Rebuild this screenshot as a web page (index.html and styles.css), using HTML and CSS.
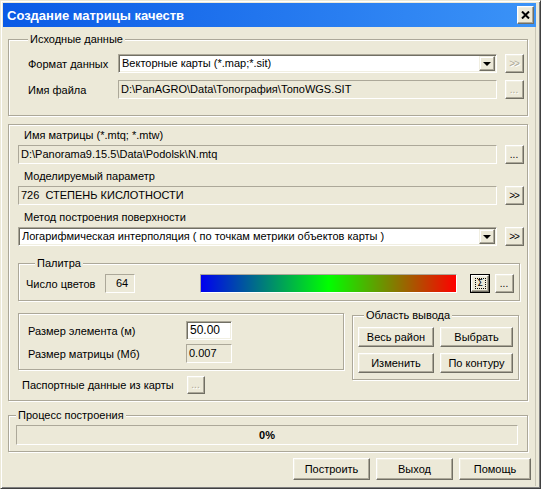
FILE: index.html
```html
<!DOCTYPE html>
<html lang="ru">
<head>
<meta charset="utf-8">
<title>Создание матрицы качеств</title>
<link rel="stylesheet" href="styles.css">
</head>
<body>
<div class="window">
  <div class="titlebar">
    <span class="title">Создание матрицы качеств</span>
    <span class="btn close"><svg width="9" height="8" viewBox="0 0 9 8"><path d="M1 0.5 L8 7.5 M8 0.5 L1 7.5" stroke="#000" stroke-width="2" fill="none"/></svg></span>
  </div>
  <div class="body">
    <fieldset class="group g1">
      <legend>Исходные данные</legend>
      <div class="row">
        <span class="lbl l1">Формат данных</span>
        <div class="combo w379"><span class="ctext">Векторные карты (*.map;*.sit)</span><span class="dd"><span class="tri"></span></span></div>
        <span class="btn sq dis">&gt;&gt;</span>
      </div>
      <div class="row r2">
        <span class="lbl l1">Имя файла</span>
        <div class="field w379">D:\PanAGRO\Data\Топография\ТопоWGS.SIT</div>
        <span class="btn sq dis dots">...</span>
      </div>
    </fieldset>

    <fieldset class="group g2">
      <div class="cap">Имя матрицы (*.mtq; *.mtw)</div>
      <div class="row">
        <div class="field w479">D:\Panorama9.15.5\Data\Podolsk\N.mtq</div>
        <span class="btn sq dots">...</span>
      </div>
      <div class="cap c2">Моделируемый параметр</div>
      <div class="row">
        <div class="field w479">726&nbsp; СТЕПЕНЬ КИСЛОТНОСТИ</div>
        <span class="btn sq">&gt;&gt;</span>
      </div>
      <div class="cap c2">Метод построения поверхности</div>
      <div class="row">
        <div class="combo w479"><span class="ctext">Логарифмическая интерполяция ( по точкам метрики объектов карты )</span><span class="dd"><span class="tri"></span></span></div>
        <span class="btn sq">&gt;&gt;</span>
      </div>

      <fieldset class="group pal">
        <legend>Палитра</legend>
        <div class="row">
          <span class="lbl l2">Число цветов</span>
          <div class="field num">64</div>
          <div class="grad"></div>
          <span class="sigwrap"><span class="btn sigma"><span class="sg">Σ</span></span></span>
          <span class="btn sq dots pd">...</span>
        </div>
      </fieldset>

      <div class="split">
        <div class="leftcol">
          <fieldset class="group size">
            <div class="row">
              <span class="lbl l3">Размер элемента (м)</span>
              <div class="edit">50.00</div>
            </div>
            <div class="row r3">
              <span class="lbl l3">Размер матрицы (Мб)</span>
              <div class="field small">0.007</div>
            </div>
          </fieldset>
          <div class="row pass">
            <span class="lbl l4">Паспортные данные из карты</span>
            <span class="btn sq dis dots ps">...</span>
          </div>
        </div>
        <fieldset class="group out">
          <legend>Область вывода</legend>
          <div class="grid">
            <span class="btn gb">Весь район</span>
            <span class="btn gb">Выбрать</span>
            <span class="btn gb">Изменить</span>
            <span class="btn gb">По контуру</span>
          </div>
        </fieldset>
      </div>
    </fieldset>

    <fieldset class="group g3">
      <legend>Процесс построения</legend>
      <div class="progress">0%</div>
    </fieldset>

    <div class="actions">
      <span class="btn act">Построить</span>
      <span class="btn act">Выход</span>
      <span class="btn act">Помощь</span>
    </div>
  </div>
</div>
</body>
</html>
```

FILE: styles.css
```css
* { box-sizing: border-box; }
html, body { margin: 0; padding: 0; }
body {
  width: 541px;
  height: 489px;
  overflow: hidden;
  background: #ece9d8;
  font-family: "Liberation Sans", Arial, sans-serif;
  font-size: 11px;
  color: #000;
}
.window {
  width: 541px;
  height: 489px;
  background: #ece9d8;
  border: 1px solid;
  border-color: #ece9d8 #404040 #404040 #ece9d8;
  box-shadow: inset 1px 1px #fff, inset -1px -1px #808080;
  padding: 2px 4px 2px 2px;
  display: flex;
  flex-direction: column;
}
.titlebar {
  height: 24px;
  flex: none;
  display: flex;
  align-items: center;
  justify-content: space-between;
  padding: 0 2px 0 4px;
  background: linear-gradient(to right, #0a5ae6, #3b93f7);
}
.title {
  color: #fff;
  font-family: "Liberation Sans", Arial, sans-serif;
  font-weight: bold;
  font-size: 13px;
}
.btn {
  display: inline-flex;
  align-items: center;
  justify-content: center;
  background: #ece9d8;
  border: 1px solid;
  border-color: #fff #716f64 #716f64 #fff;
  box-shadow: inset -1px -1px #aca899, inset 1px 1px #f1efe2;
  color: #000;
  flex: none;
  white-space: nowrap;
}
.close {
  width: 17px;
  height: 18px;
}
.body {
  flex: 1;
  padding: 0 7px 0 5px;
  display: flex;
  flex-direction: column;
  border-right: 1px solid #c9c6b6;
}
.group {
  margin: 0;
  padding: 0;
  min-width: 0;
  border: 1px solid #aca899;
  box-shadow: inset 1px 1px #fff, 1px 1px #fff;
}
.group legend {
  padding: 0 2px;
  line-height: 13px;
  height: 13px;
  background: #ece9d8;
}
.row {
  display: flex;
  align-items: center;
}
.lbl { flex: none; white-space: nowrap; }
.field {
  height: 19px;
  background: #ece9d8;
  border: 1px solid;
  border-color: #aca899 #fff #fff #aca899;
  padding: 0 2px;
  line-height: 17px;
  white-space: nowrap;
  overflow: hidden;
  flex: none;
}
.combo {
  height: 19px;
  background: #fff;
  border: 1px solid;
  border-color: #aca899 #fff #fff #aca899;
  box-shadow: inset 1px 1px #716f64, inset -1px -1px #f1efe2;
  padding: 2px 2px 2px 3px;
  display: flex;
  align-items: center;
  justify-content: space-between;
  flex: none;
}
.ctext { white-space: nowrap; overflow: hidden; line-height: 13px; }
.dd {
  width: 16px;
  height: 15px;
  margin-right: -1px;
  display: flex;
  align-items: center;
  justify-content: center;
  background: #ece9d8;
  border: 1px solid;
  border-color: #f1efe2 #716f64 #716f64 #f1efe2;
  box-shadow: inset -1px -1px #aca899, inset 1px 1px #fff;
  flex: none;
}
.tri {
  width: 0;
  height: 0;
  border-left: 4px solid transparent;
  border-right: 4px solid transparent;
  border-top: 4px solid #000;
}
.w379 { width: 379px; }
.w479 { width: 479px; }
.sq {
  width: 19px;
  height: 19px;
  margin-left: 8px;
  font-size: 10px;
  letter-spacing: -1px;
  padding-right: 1px;
}
.dots { letter-spacing: 0; align-items: flex-end; padding-bottom: 3px; }
.dis { color: #aca899; text-shadow: 1px 1px #fff; }

/* group 1 */
.g1 { margin-top: 6px; padding: 8px 3px 16px 19px; }
.l1 { width: 90px; }
.r2 { margin-top: 7px; }

/* group 2 */
.g2 { margin-top: 8px; padding: 4px 3px 6px 9px; }
.cap { padding-left: 6px; line-height: 13px; height: 13px; margin-bottom: 3px; }
.c2 { margin-top: 6px; }

.pal { margin-top: 11px; width: 502px; padding: 4px 0 7px 7px; }
.pal legend { margin-left: 9px; }
.l2 { width: 79px; }
.num { width: 30px; text-align: center; padding: 0 0 0 4px; }
.grad {
  width: 257px;
  height: 19px;
  margin-left: 65px;
  border: 1px solid;
  border-color: #aca899 #fff #fff #aca899;
  background: linear-gradient(to right, #0000f0, #00ff00 50%, #ff0000);
  flex: none;
}
.sigwrap {
  display: flex;
  width: 20px;
  height: 19px;
  margin-left: 13px;
  border: 1px solid #000;
  flex: none;
}
.sigma {
  width: 18px;
  height: 17px;
  padding: 0;
}
.sg {
  border: 1px dotted #000;
  font-family: "DejaVu Sans", sans-serif;
  font-size: 9px;
  line-height: 9px;
  width: 11px;
  height: 11px;
  display: flex;
  align-items: center;
  justify-content: center;
}
.pd { margin-left: 5px; }

.split { display: flex; align-items: flex-start; margin-top: 8px; }
.leftcol { width: 326px; flex: none; }
.size { margin-top: 4px; padding: 7px 0 6px 9px; }
.l3 { width: 158px; }
.r3 { margin-top: 4px; }
.edit {
  width: 46px;
  height: 19px;
  background: #fff;
  border: 1px solid;
  border-color: #aca899 #fff #fff #aca899;
  box-shadow: inset 1px 1px #716f64, inset -1px -1px #f1efe2;
  padding: 0 3px;
  line-height: 17px;
  font-size: 12px;
}
.small { width: 46px; }
.pass { margin-top: 6px; padding-left: 4px; }
.l4 { width: 165px; }
.ps { margin-left: 0; width: 18px; height: 18px; }

.out { margin-left: 8px; width: 167px; padding: 5px 5px 6px 5px; }
.out legend { margin-left: 6px; }
.grid {
  display: grid;
  grid-template-columns: 76px 73px;
  grid-auto-rows: 20px;
  gap: 6px;
}
.gb { height: 20px; font-size: 11px; }

/* group 3 */
.g3 { margin-top: 8px; padding: 3px 7px 6px 7px; }
.progress {
  width: 502px;
  height: 20px;
  border: 1px solid;
  border-color: #aca899 #fff #fff #aca899;
  display: flex;
  align-items: center;
  justify-content: center;
  font-weight: bold;
  font-size: 11px;
}

.actions {
  display: flex;
  justify-content: flex-end;
  gap: 6px;
  margin-top: 6px;
  margin-right: -3px;
}
.act { width: 77px; height: 22px; }
.act:last-child { width: 72px; }
```
